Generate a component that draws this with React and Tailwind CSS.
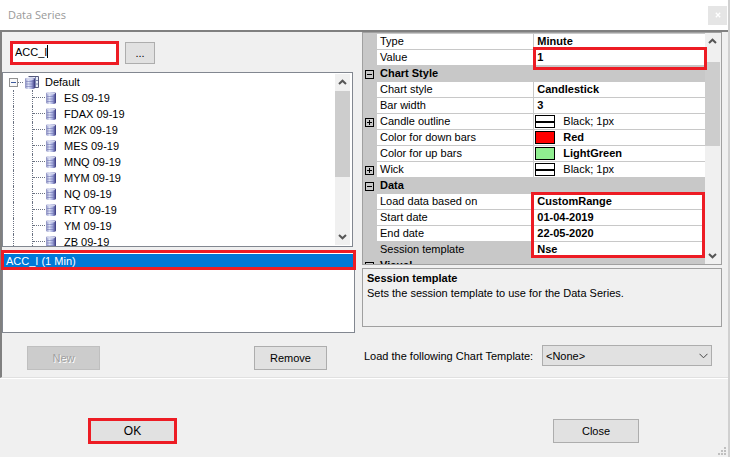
import { useState } from 'react';

const instruments = ['ES', 'FDAX', 'M2K', 'MES', 'MNQ', 'MYM', 'NQ', 'RTY', 'YM', 'ZB'];

const properties = [
  { label: 'Type', value: 'Minute' },
  { label: 'Value', value: '1', mark: 'single' },
  { label: 'Chart Style', category: true },
  { label: 'Chart style', value: 'Candlestick' },
  { label: 'Bar width', value: '3' },
  { label: 'Candle outline', value: 'Black; 1px', swatch: 'line', expandable: true },
  { label: 'Color for down bars', value: 'Red', swatch: 'red' },
  { label: 'Color for up bars', value: 'LightGreen', swatch: 'green' },
  { label: 'Wick', value: 'Black; 1px', swatch: 'line', expandable: true },
  { label: 'Data', category: true },
  { label: 'Load data based on', value: 'CustomRange', mark: 'group' },
  { label: 'Start date', value: '01-04-2019' },
  { label: 'End date', value: '22-05-2020' },
  { label: 'Session template', value: 'Nse', selected: true },
  { label: 'Visual', category: true },
];

const buttonClass = 'h-6 border border-[#adadad] bg-[#e1e1e1] text-center text-black';

const ExpandBox = ({ open }) => (
  <svg width="9" height="9" viewBox="0 0 9 9" shapeRendering="crispEdges" className="block">
    <rect x="0.5" y="0.5" width="8" height="8" fill="none" stroke="#000" />
    <path d={open ? 'M2 4.5h5' : 'M2 4.5h5M4.5 2v5'} stroke="#000" />
  </svg>
);

const DatabaseIcon = () => (
  <svg width="10" height="12" viewBox="0 0 10 12" className="block shrink-0">
    <defs>
      <linearGradient id="cylinder">
        <stop offset="0" stopColor="#8b8fc0" />
        <stop offset="0.35" stopColor="#dfe4f8" />
        <stop offset="0.65" stopColor="#a3a9dc" />
        <stop offset="1" stopColor="#34347c" />
      </linearGradient>
    </defs>
    <path d="M0 1.5Q0 0 5 0T10 1.5V10.5Q10 12 5 12T0 10.5Z" fill="url(#cylinder)" />
    <path d="M1 4.5h7M1 7h7M1 9.5h7" stroke="#7277b4" strokeWidth="0.6" />
    <ellipse cx="5" cy="1.5" rx="4" ry="1" fill="#d3d6ec" />
  </svg>
);

const GroupIcon = () => (
  <svg width="14" height="13" viewBox="0 0 14 13" className="block shrink-0">
    <path d="M3.5 0.5h10v11h-6" fill="#e9edf8" stroke="#55597c" />
    <path d="M10.5 1v10M8 4.5h5M8 8h5" stroke="#7f88b0" />
    <path d="M0 3Q0 1.5 5 1.5T10 3V11.5Q10 13 5 13T0 11.5Z" fill="url(#cylinder)" />
    <path d="M1 5.5h7M1 8h7M1 10.5h7" stroke="#7277b4" strokeWidth="0.6" />
    <ellipse cx="5" cy="2.9" rx="4" ry="1" fill="#d3d6ec" />
  </svg>
);

const Arrow = ({ down }) => (
  <svg width="9" height="7" viewBox="0 0 9 7" className={down ? 'block rotate-180' : 'block'}>
    <path d="M1 5L4.5 1.7L8 5" fill="none" stroke="#555" strokeWidth="2" />
  </svg>
);

const ScrollBar = ({ thumb }) => (
  <div className="flex w-[15px] shrink-0 flex-col bg-[#f0f0f0]">
    <button aria-label="Scroll up" className="flex h-[17px] items-center justify-center">
      <Arrow />
    </button>
    <div className="flex flex-1 flex-col">
      {thumb === 'top' ? <div className="h-[86px] bg-[#cdcdcd]" /> : <div className="mt-3 h-[84px] bg-[#cdcdcd]" />}
    </div>
    <button aria-label="Scroll down" className="flex h-[17px] items-center justify-center">
      <Arrow down />
    </button>
  </div>
);

const InstrumentTree = () => (
  <div className="mr-0.5 flex h-[175px] overflow-hidden border border-[#828790] bg-white">
    <ul className="min-w-0 flex-1 pt-px">
      <li>
        <div className="flex h-4 items-center pl-1.5">
          <svg width="9" height="9" viewBox="0 0 9 9" shapeRendering="crispEdges">
            <rect x="0.5" y="0.5" width="8" height="8" fill="#f8f8f8" stroke="#919191" />
            <path d="M2 4.5h5" stroke="#3c5a9c" />
          </svg>
          <span className="mr-0.5 w-[5px] border-t border-dotted border-gray-500" />
          <GroupIcon />
          <span className="pl-1.5">Default</span>
        </div>
        <ul>
          {instruments.map((name) => (
            <li key={name} className="flex h-4 items-center pl-2.5">
              <span className="h-4 w-[19px] border-l border-dotted border-gray-500" />
              <span className="h-4 w-3.5 border-l border-dotted border-gray-500">
                <span className="block h-2 w-3 border-b border-dotted border-gray-500" />
              </span>
              <DatabaseIcon />
              <span className="pl-2">{name} 09-19</span>
            </li>
          ))}
        </ul>
      </li>
    </ul>
    <div className="flex py-px pr-0.5">
      <ScrollBar thumb="top" />
    </div>
  </div>
);

const Swatch = ({ kind }) => {
  if (kind === 'line') {
    return (
      <span className="flex h-[13px] w-5 shrink-0 items-center border border-black bg-white">
        <span className="h-0.5 w-full bg-black" />
      </span>
    );
  }
  return (
    <span
      className={
        kind === 'red'
          ? 'h-[13px] w-5 shrink-0 border border-black bg-[#ff0000]'
          : 'h-[13px] w-5 shrink-0 border border-black bg-[#90ee90]'
      }
    />
  );
};

const PropertyRow = ({ item }) => {
  if (item.category) {
    return (
      <tr className="bg-[#c8c8c8]">
        <td className="h-4 pl-0.5">
          <ExpandBox open />
        </td>
        <th colSpan={2} scope="rowgroup" className="h-4 border-b border-[#c8c8c8] pl-[3px] text-left font-bold">
          {item.label}
        </th>
      </tr>
    );
  }

  return (
    <tr>
      <td className="h-4 bg-[#c8c8c8] pl-0.5">{item.expandable && <ExpandBox />}</td>
      <th
        scope="row"
        className={
          item.selected
            ? 'h-4 border-r border-b border-[#c8c8c8] bg-[#c8c8c8] pl-[3px] text-left font-normal'
            : 'h-4 border-r border-b border-[#c8c8c8] bg-white pl-[3px] text-left font-normal'
        }
      >
        {item.label}
      </th>
      <td className="relative h-4 border-b border-[#c8c8c8] bg-white">
        {item.swatch ? (
          <div className="flex h-[15px] items-center gap-2 pl-px">
            <Swatch kind={item.swatch} />
            <span className={item.swatch === 'line' ? '' : 'font-bold'}>{item.value}</span>
          </div>
        ) : (
          <div className="pl-[3px] font-bold">{item.value}</div>
        )}
        {item.mark === 'single' && (
          <span className="absolute -top-[3px] -right-0.5 -left-px z-10 h-[23px] border-3 border-[#ed1c24]" />
        )}
        {item.mark === 'group' && (
          <span className="absolute -top-0.5 right-0 -left-[3px] z-10 h-[66px] border-3 border-[#ed1c24]" />
        )}
      </td>
    </tr>
  );
};

const PropertyGrid = () => (
  <div className="flex h-[233px] overflow-hidden border border-[#a0a0a0] bg-[#c8c8c8]">
    <div className="min-w-0 flex-1 pt-px">
      <table className="w-full table-fixed border-separate border-spacing-0 leading-[15px]">
        <colgroup>
          <col className="w-3.5" />
          <col className="w-[46%]" />
          <col />
        </colgroup>
        <tbody>
          {properties.map((item) => (
            <PropertyRow key={item.label} item={item} />
          ))}
        </tbody>
      </table>
    </div>
    <div className="flex bg-[#f0f0f0] pr-px">
      <ScrollBar thumb="middle" />
    </div>
  </div>
);

export default function App() {
  const [instrument, setInstrument] = useState('ACC_I');
  const [template, setTemplate] = useState('none');

  return (
    <div className="flex min-h-screen flex-col border-r-2 border-[#d0d0d0] bg-[#f0f0f0] font-['Liberation_Sans',Arial,sans-serif] text-[11px] leading-4 text-black">
      <header className="flex h-[30px] items-center justify-between bg-white pr-px pl-2">
        <h1 className="font-['Open_Sans',sans-serif] text-[11px] text-[#999999]">Data Series</h1>
        <button aria-label="Close window" className="flex h-[19px] w-[19px] items-center justify-center bg-[#e5e5e5]">
          <svg width="6" height="6" viewBox="0 0 6 6">
            <path d="M0.8 0.8L5.2 5.2M5.2 0.8L0.8 5.2" stroke="#fff" strokeWidth="1.3" />
          </svg>
        </button>
      </header>

      <main className="grid grid-cols-[353fr_360fr] gap-[7px] border-t-2 border-b border-l-2 border-t-[#808080] border-b-[#e0e0e0] border-l-[#808080] pr-[6px]">
        <section className="flex flex-col">
          <div className="flex h-10 items-center gap-1.5 pt-1.5 pb-1 pl-2">
            <div className="relative h-6 w-[109px]">
              <input
                aria-label="Instrument"
                value={instrument}
                onChange={(e) => setInstrument(e.target.value)}
                className="block h-full w-full border-3 border-[#ed1c24] bg-white pb-0.5 pl-0.5 outline-none"
              />
              <span className="absolute top-1 left-[37px] h-[13px] w-px bg-black" />
            </div>
            <button className="h-[22px] w-[30px] border border-[#adadad] bg-[#e1e1e1]">...</button>
          </div>

          <InstrumentTree />

          <div role="listbox" aria-label="Selected series" className="relative mt-1 h-[82px] border border-[#828790] bg-white pt-0.5">
            <div role="option" aria-selected="true" className="h-3.5 bg-[#0078d7] pl-[3px] leading-[14px] text-white">
              ACC_I (1 Min)
            </div>
            <span className="absolute -top-0.5 -right-0.5 -left-0.5 h-5 border-3 border-[#ed1c24]" />
          </div>

          <div className="flex justify-between pt-[13px] pr-7 pb-[7px] pl-[25px]">
            <button disabled className="h-6 w-[73px] border border-[#bfbfbf] bg-[#cccccc] text-[#a0a0a0] [text-shadow:1px_1px_0_#fff]">
              New
            </button>
            <button className={`${buttonClass} w-[73px]`}>Remove</button>
          </div>
        </section>

        <section className="flex flex-col">
          <PropertyGrid />

          <div className="mt-[3px] h-[59px] border border-[#a0a0a0] px-1 pt-0.5 leading-[15px]">
            <h2 className="font-bold">Session template</h2>
            <p>Sets the session template to use for the Data Series.</p>
          </div>

          <div className="flex items-center gap-[7px] pt-[18px] pr-2.5 pl-0.5">
            <label htmlFor="template" className="shrink-0 whitespace-nowrap">
              Load the following Chart Template:
            </label>
            <div className="relative ml-auto w-[170px]">
              <select
                id="template"
                value={template}
                onChange={(e) => setTemplate(e.target.value)}
                className="block h-[21px] w-full appearance-none border border-[#adadad] bg-[#e1e1e1] pl-[3px]"
              >
                <option value="none">&lt;None&gt;</option>
              </select>
              <svg width="9" height="6" viewBox="0 0 9 6" className="pointer-events-none absolute top-2 right-1">
                <path d="M0.5 0.8L4.5 4.8L8.5 0.8" fill="none" stroke="#444" />
              </svg>
            </div>
          </div>
        </section>
      </main>

      <footer className="relative flex-1 border-t border-white">
        <div className="flex items-center justify-between pt-[39px] pr-[89px] pl-[88px]">
          <button className="h-[26px] w-[89px] border-3 border-[#ed1c24] bg-[#e1e1e1] text-[12px]">OK</button>
          <button className={`${buttonClass} w-[86px]`}>Close</button>
        </div>
        <svg width="8" height="8" viewBox="0 0 8 8" className="absolute right-0.5 bottom-0.5">
          <path d="M6 0h2v2H6zM3 3h2v2H3zM6 3h2v2H6zM0 6h2v2H0zM3 6h2v2H3zM6 6h2v2H6z" fill="#bfbfbf" />
        </svg>
      </footer>
    </div>
  );
}
